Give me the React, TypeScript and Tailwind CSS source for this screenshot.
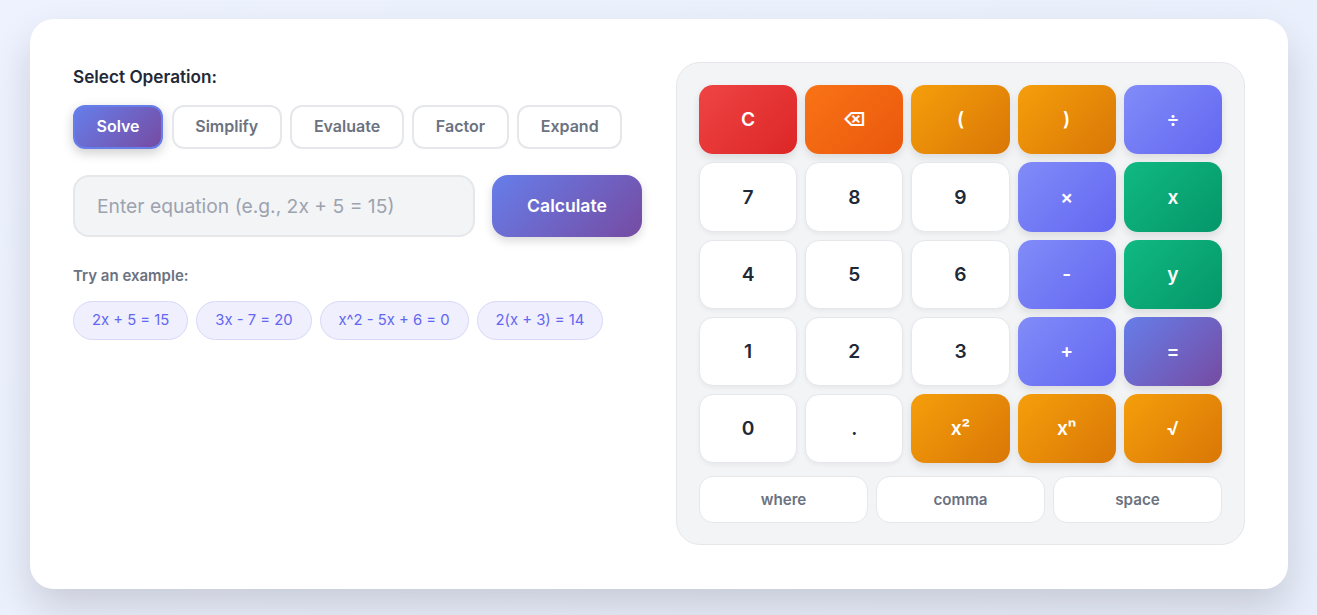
const operations = ["Solve", "Simplify", "Evaluate", "Factor", "Expand"];
const examples = ["2x + 5 = 15", "3x - 7 = 20", "x^2 - 5x + 6 = 0", "2(x + 3) = 14"];

const keyBase =
  "flex h-[69.25px] items-center justify-center rounded-[14px] text-[19.2px] font-semibold";
const tones = {
  num: "border border-[#e5e7eb] bg-white text-[#1f2937] shadow-[0_2px_4px_rgba(0,0,0,0.05)]",
  red: "bg-[linear-gradient(135deg,#ef4444,#dc2626)] text-white shadow-[0_4px_8px_rgba(0,0,0,0.1)]",
  orange: "bg-[linear-gradient(135deg,#f97316,#ea580c)] text-white shadow-[0_4px_8px_rgba(0,0,0,0.1)]",
  amber: "bg-[linear-gradient(135deg,#f59e0b,#d97706)] text-white shadow-[0_4px_8px_rgba(0,0,0,0.1)]",
  indigo: "bg-[linear-gradient(135deg,#818cf8,#6366f1)] text-white shadow-[0_4px_8px_rgba(0,0,0,0.1)]",
  green: "bg-[linear-gradient(135deg,#10b981,#059669)] text-white shadow-[0_4px_8px_rgba(0,0,0,0.1)]",
  purple: "bg-[linear-gradient(135deg,#667eea,#764ba2)] text-white shadow-[0_4px_8px_rgba(0,0,0,0.1)]",
};

const keys: { label: string; tone: keyof typeof tones }[] = [
  { label: "C", tone: "red" },
  { label: "⌫", tone: "orange" },
  { label: "(", tone: "amber" },
  { label: ")", tone: "amber" },
  { label: "÷", tone: "indigo" },
  { label: "7", tone: "num" },
  { label: "8", tone: "num" },
  { label: "9", tone: "num" },
  { label: "×", tone: "indigo" },
  { label: "x", tone: "green" },
  { label: "4", tone: "num" },
  { label: "5", tone: "num" },
  { label: "6", tone: "num" },
  { label: "-", tone: "indigo" },
  { label: "y", tone: "green" },
  { label: "1", tone: "num" },
  { label: "2", tone: "num" },
  { label: "3", tone: "num" },
  { label: "+", tone: "indigo" },
  { label: "=", tone: "purple" },
  { label: "0", tone: "num" },
  { label: ".", tone: "num" },
  { label: "x²", tone: "amber" },
  { label: "xⁿ", tone: "amber" },
  { label: "√", tone: "amber" },
];

export default function App() {
  return (
    <div className="min-h-[615px] bg-[linear-gradient(135deg,#eef2ff,#e8eefb)] pb-[26px] pl-[30px] pt-[18.5px] font-['Inter',sans-serif]">
      <div className="grid h-[570px] w-[1258px] grid-cols-2 gap-[34px] rounded-[24px] bg-white px-[43px] py-[43.5px] shadow-[0_20px_40px_rgba(0,0,0,0.15)]">
        <div>
          <h2 className="mb-[16px] mt-[3px] text-[17.2px] font-semibold leading-[24px] text-[#1f2937]">Select Operation:</h2>
          <div className="flex gap-[8.7px]">
            {operations.map((op, i) => (
              <button
                key={op}
                className={
                  i === 0
                    ? "h-[44px] rounded-[12px] border-2 border-[#667eea] bg-[linear-gradient(135deg,#667eea,#764ba2)] px-[21.5px] pb-[2px] text-base font-semibold text-white shadow-[0_4px_12px_rgba(0,0,0,0.2)]"
                    : "h-[44px] rounded-[12px] border-2 border-[#e5e7eb] bg-white px-[21.5px] pb-[2px] text-base font-semibold text-[#6b7280]"
                }
              >
                {op}
              </button>
            ))}
          </div>
          <div className="mt-[26px] flex gap-[17px]">
            <input
              readOnly
              placeholder="Enter equation (e.g., 2x + 5 = 15)"
              className="h-[62px] min-w-0 flex-1 rounded-[16px] border-2 border-[#e5e7eb] bg-[#f3f4f6] px-[22px] text-[19.3px] text-[#1f2937] outline-none placeholder:text-[#9ca3af]"
            />
            <button className="h-[62px] w-[150px] rounded-[16px] bg-[linear-gradient(135deg,#667eea,#764ba2)] text-[17.6px] font-semibold text-white shadow-[0_4px_10px_rgba(0,0,0,0.15)]">
              Calculate
            </button>
          </div>
          <p className="mt-[29px] text-[15px] font-semibold leading-[20px] text-[#6b7280]">Try an example:</p>
          <div className="mt-[15px] flex gap-2">
            {examples.map((ex) => (
              <span
                key={ex}
                className="flex h-[39px] items-center rounded-[20px] border border-[#d9d8f9] bg-[#efeffd] px-[18px] text-[14.8px] text-[#6366f1]"
              >
                {ex}
              </span>
            ))}
          </div>
        </div>

        <div className="h-[483px] rounded-[24px] border border-[#e5e7eb] bg-[#f3f4f6] px-[22px] pb-[22px] pt-[22.2px]">
          <div className="grid grid-cols-5 gap-2">
            {keys.map((key) => (
              <button key={key.label} className={`${keyBase} ${tones[key.tone]}`}>
                {key.label}
              </button>
            ))}
          </div>
          <div className="mt-[12.7px] grid grid-cols-3 gap-2">
            {["where", "comma", "space"].map((word) => (
              <button
                key={word}
                className="h-[47px] rounded-[14px] border border-[#e5e7eb] bg-white pt-[2px] text-[15.2px] font-semibold text-[#6b7280]"
              >
                {word}
              </button>
            ))}
          </div>
        </div>
      </div>
    </div>
  );
}
